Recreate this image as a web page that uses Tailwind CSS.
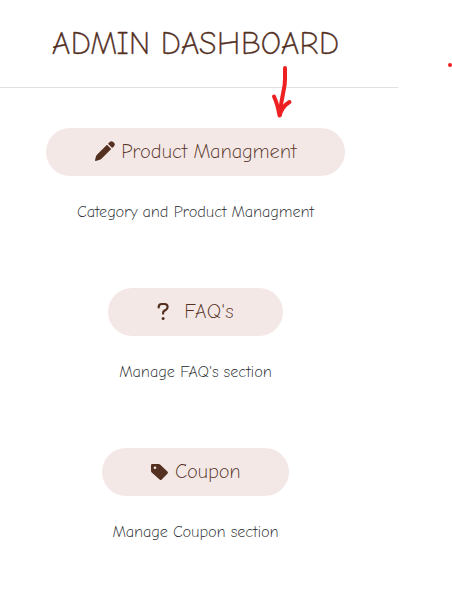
<!DOCTYPE html>
<html lang="en">
<head>
<meta charset="utf-8">
<title>Admin Dashboard</title>
<script src="https://cdn.jsdelivr.net/npm/@tailwindcss/browser@4"></script>
</head>
<body class="relative h-[594px] w-[452px] overflow-hidden bg-white font-['Comic_Neue','Lato',sans-serif] font-light text-[#53301f]">
<header class="h-[88px] w-[398px] border-b border-[#e0e0e0] pt-6 pr-[7px]">
  <h1 class="text-center text-[32px] leading-[40px] font-light tracking-[-0.2px] whitespace-nowrap [-webkit-text-stroke:0.3px_#53301f]">ADMIN DASHBOARD</h1>
</header>
<main class="flex w-[391px] flex-col items-center pt-10">
  <section class="flex h-40 flex-col items-center">
    <a class="flex h-12 w-[299px] items-center rounded-full bg-[#f4e8e6] pl-[49px]">
      <svg class="mr-[7px] size-5 shrink-0 -translate-y-[1px]" viewBox="0 0 20 20" fill="#53301f"><path d="M12 3.8 16.2 8 6.5 17.7Q5.5 18.7 4 19.1L.7 20Q0 20 0 19.3L.8 16Q1.2 14.6 2.2 13.6Z"/><path d="m13 2.8 1.7-1.7Q16.4-.5 18.2 1l.8.8q1.6 1.7 0 3.4L17.2 7Z"/></svg>
      <span class="-ml-px text-xl leading-7 tracking-[-0.17px] whitespace-nowrap">Product Managment</span>
    </a>
    <p class="mt-6 text-base leading-6 tracking-[-0.13px] whitespace-nowrap text-[#212529]">Category and Product Managment</p>
  </section>
  <section class="flex h-40 flex-col items-center">
    <a class="flex h-12 w-[175px] items-center rounded-full bg-[#f4e8e6] pl-[49px]">
      <svg class="mr-[7px] h-5 w-5 shrink-0 -translate-y-[1px]" viewBox="0 0 20 20" fill="none" stroke="#53301f" stroke-width="2.2" stroke-linecap="round"><path d="M1.7 6.5V6Q1.7 3 4.8 3h2.6q3.2 0 3.2 3 0 1.9-1.9 3L7.3 9.8q-1.2.7-1.2 2.4v.4"/><circle cx="6.1" cy="17.4" r="1.5" fill="#53301f" stroke="none"/></svg>
      <span class="text-xl leading-7 tracking-[0.2px] whitespace-nowrap">FAQ's</span>
    </a>
    <p class="mt-6 text-base leading-6 tracking-[-0.08px] whitespace-nowrap text-[#212529]">Manage FAQ's section</p>
  </section>
  <section class="flex h-40 flex-col items-center">
    <a class="flex h-12 w-[187px] items-center rounded-full bg-[#f4e8e6] pl-[49px]">
      <svg class="mr-[7px] h-5 w-[17px] shrink-0 -translate-y-[1px]" viewBox="0 0 17 20" fill="#53301f"><path fill-rule="evenodd" d="M0 4.3Q0 3 1.3 3h6.3q1 0 1.7.7l7.1 6.8q1 1.1 0 2.2l-5.7 5.7q-1 1-2.1 0L.7 11.5Q0 10.8 0 9.8ZM4 5.4a1.35 1.35 0 1 0 0 2.7 1.35 1.35 0 0 0 0-2.7Z"/></svg>
      <span class="text-xl leading-7 tracking-[-0.22px] whitespace-nowrap">Coupon</span>
    </a>
    <p class="mt-6 text-base leading-6 tracking-[-0.13px] whitespace-nowrap text-[#212529]">Manage Coupon section</p>
  </section>
</main>
<svg class="pointer-events-none absolute inset-0" width="452" height="594" viewBox="0 0 452 594" fill="none" stroke="#ee2022" stroke-width="4" stroke-linecap="round" stroke-linejoin="round"><path d="M285 68V79Q285 85 283.5 91 281 102 280 115M274 96.500Q277.500 104 279.500 115.500Q282.500 106 289.500 102"/><circle cx="450" cy="65" r="2" fill="#ee2022" stroke="none"/></svg>
</body>
</html>
